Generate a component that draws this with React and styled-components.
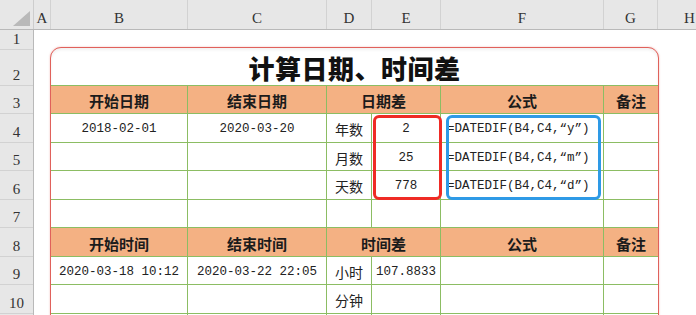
import React from "react";
import styled, { createGlobalStyle } from "styled-components";

const GlobalStyle = createGlobalStyle`
  html, body {
    margin: 0;
    padding: 0;
    background: #fff;
    overflow: hidden;
  }
  #root {
    width: 696px;
    height: 315px;
    overflow: hidden;
  }
`;

const GREEN = "#8cbd63";
const SERIF = `"Liberation Serif", "Noto Sans CJK SC", serif`;
const MONO = `"Liberation Mono", "Noto Sans CJK SC", monospace`;
const CJK = `"Noto Sans CJK SC", "Liberation Sans", sans-serif`;

// sheet geometry, in px
const COL_WIDTHS = [137, 139, 45, 69, 163, 54];
const HEAD_COLS = [
  ["A", 17],
  ["B", 137],
  ["C", 139],
  ["D", 45],
  ["E", 69],
  ["F", 163],
  ["G", 54],
  ["H", 64],
];
const ROW_HEIGHTS = [20, 36, 28, 29, 28, 29, 28, 29, 28, 29];
const CARD_ROWS = [38, 28, 29, 28, 29, 28, 29, 28, 29, 29];

const Sheet = styled.div`
  width: 696px;
  height: 315px;
  display: flex;
  flex-direction: column;
  background: #fff;
  overflow: hidden;
`;

const ColHeader = styled.div`
  display: flex;
  height: 30px;
  flex: none;
  background: #e7e7e7;
  border-bottom: 1px solid #b9b9b9;
  box-sizing: border-box;
  overflow: hidden;
`;

const Corner = styled.div`
  width: 34px;
  flex: none;
  display: flex;
  align-items: flex-end;
  justify-content: flex-end;
  padding: 0 3px 3px 0;
  box-sizing: border-box;
  border-right: 1px solid #cdcdcd;
`;

const ColLabel = styled.div`
  width: ${({ $w }) => $w}px;
  flex: none;
  box-sizing: border-box;
  border-right: 1px solid #d2d2d2;
  display: flex;
  align-items: flex-end;
  justify-content: center;
  padding-bottom: 3px;
  font-family: ${SERIF};
  font-size: 15px;
  line-height: 16px;
  color: #333;
`;

const Body = styled.div`
  flex: 1;
  display: flex;
  min-height: 0;
`;

const RowHeader = styled.div`
  width: 34px;
  flex: none;
  background: #e7e7e7;
  border-right: 1px solid #b9b9b9;
  box-sizing: border-box;
`;

const RowLabel = styled.div`
  height: ${({ $h }) => $h}px;
  box-sizing: border-box;
  border-bottom: 1px solid #d2d2d2;
  display: flex;
  align-items: flex-end;
  justify-content: center;
  padding-bottom: 2px;
  font-family: ${SERIF};
  font-size: 15px;
  line-height: 16px;
  color: #333;
`;

const Canvas = styled.div`
  flex: 1;
  padding: 17px 0 0 16px;
  overflow: hidden;
`;

const Card = styled.div`
  width: 609px;
  box-sizing: border-box;
  border: 1px solid #e0615b;
  border-radius: 11px;
  box-shadow: 0 0 2px rgba(224, 97, 91, 0.45), inset 0 2px 3px rgba(0, 0, 0, 0.06);
  overflow: hidden;
  background: #fff;
  display: grid;
  grid-template-columns: ${COL_WIDTHS.map((w) => w + "px").join(" ")};
  grid-template-rows: ${CARD_ROWS.map((h) => h + "px").join(" ")};
`;

const Title = styled.div`
  grid-column: 1 / -1;
  grid-row: 1;
  display: flex;
  align-items: center;
  justify-content: center;
  border-bottom: 1px solid ${GREEN};
  font-family: ${CJK};
  font-weight: 900;
  font-size: 26px;
  letter-spacing: 0.5px;
  color: #111;
  padding-top: 2px;
  box-sizing: border-box;
`;

const Cell = styled.div`
  grid-column: ${({ $col, $span }) => `${$col} / span ${$span}`};
  grid-row: ${({ $row }) => $row};
  box-sizing: border-box;
  border-bottom: 1px solid ${GREEN};
  border-right: ${({ $last }) => ($last ? "none" : `1px solid ${GREEN}`)};
  background: ${({ $head }) => ($head ? "#f4b183" : "#fff")};
  display: flex;
  align-items: center;
  justify-content: ${({ $align }) => ($align === "left" ? "flex-start" : "center")};
  padding: 2px 0 0 ${({ $align }) => ($align === "left" ? "6px" : "0")};
  font-family: ${({ $mono }) => ($mono ? MONO : CJK)};
  font-size: ${({ $mono, $head }) => ($mono ? "12.5px" : $head ? "15px" : "14px")};
  font-weight: ${({ $head }) => ($head ? 700 : 400)};
  color: ${({ $head }) => ($head ? "#1b1b1b" : "#222")};
  white-space: nowrap;
`;

const Highlight = styled.div`
  grid-column: ${({ $col }) => $col};
  grid-row: 3 / 6;
  border: 3px solid ${({ $color }) => $color};
  border-radius: 6px;
  margin: ${({ $inset }) => $inset};
  pointer-events: none;
  z-index: 2;
`;

const TriangleMark = () => (
  <svg width="17" height="15" viewBox="0 0 17 15">
    <polygon points="17,0 17,15 0,15" fill="#b9b9b9" />
  </svg>
);

const isMono = (t) => /^[\d=.:\- A-Z(“”),a-z]+$/.test(t) && t !== "";

const rows = [
  {
    head: true,
    cells: [["开始日期"], ["结束日期"], ["日期差", 2], ["公式"], ["备注"]],
  },
  {
    cells: [["2018-02-01"], ["2020-03-20"], ["年数"], ["2"], ["=DATEDIF(B4,C4,“y”)", 1, "left"], [""]],
  },
  {
    cells: [[""], [""], ["月数"], ["25"], ["=DATEDIF(B4,C4,“m”)", 1, "left"], [""]],
  },
  {
    cells: [[""], [""], ["天数"], ["778"], ["=DATEDIF(B4,C4,“d”)", 1, "left"], [""]],
  },
  { cells: [[""], [""], [""], [""], [""], [""]] },
  {
    head: true,
    cells: [["开始时间"], ["结束时间"], ["时间差", 2], ["公式"], ["备注"]],
  },
  {
    cells: [["2020-03-18 10:12"], ["2020-03-22 22:05"], ["小时"], ["107.8833"], [""], [""]],
  },
  { cells: [[""], [""], ["分钟"], [""], [""], [""]] },
  { cells: [[""], [""], [""], [""], [""], [""]] },
];

const SheetRow = ({ row, index }) => {
  let col = 1;
  return row.cells.map(([text, span = 1, align], i) => {
    const start = col;
    col += span;
    return (
      <Cell
        key={i}
        $row={index + 2}
        $col={start}
        $span={span}
        $align={align}
        $head={row.head}
        $mono={isMono(text)}
        $last={start + span > COL_WIDTHS.length}
      >
        {text}
      </Cell>
    );
  });
};

export default function App() {
  return (
    <>
      <GlobalStyle />
      <Sheet>
        <ColHeader>
          <Corner>
            <TriangleMark />
          </Corner>
          {HEAD_COLS.map(([label, w]) => (
            <ColLabel key={label} $w={w}>
              {label}
            </ColLabel>
          ))}
        </ColHeader>
        <Body>
          <RowHeader>
            {ROW_HEIGHTS.map((h, i) => (
              <RowLabel key={i} $h={h}>
                {i + 1}
              </RowLabel>
            ))}
          </RowHeader>
          <Canvas>
            <Card>
              <Title>计算日期、时间差</Title>
              {rows.map((row, i) => (
                <SheetRow key={i} row={row} index={i} />
              ))}
              <Highlight $col={4} $color="#ef2b25" $inset="1px -1px 0 1px" />
              <Highlight $col={5} $color="#2e9ae6" $inset="1px 3px 0 5px" />
            </Card>
          </Canvas>
        </Body>
      </Sheet>
    </>
  );
}
